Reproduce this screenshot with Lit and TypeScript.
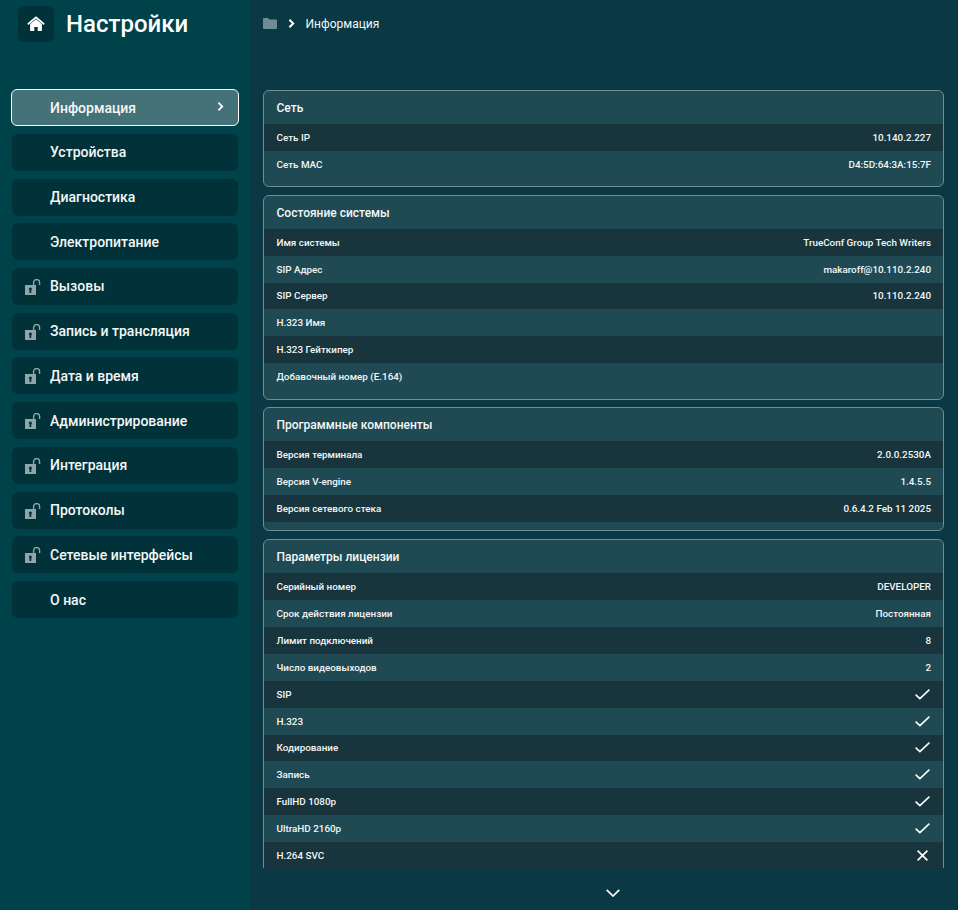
import { LitElement, html, css, svg } from "lit";
import { customElement } from "lit/decorators.js";

const nav: [string, boolean][] = [
  ["Устройства", false],
  ["Диагностика", false],
  ["Электропитание", false],
  ["Вызовы", true],
  ["Запись и трансляция", true],
  ["Дата и время", true],
  ["Администрирование", true],
  ["Интеграция", true],
  ["Протоколы", true],
  ["Сетевые интерфейсы", true],
  ["О нас", false],
];

type Row = [string, string];
const cards: { title: string; rows: Row[] }[] = [
  { title: "Сеть", rows: [["Сеть IP", "10.140.2.227"], ["Сеть MAC", "D4:5D:64:3A:15:7F"]] },
  {
    title: "Состояние системы",
    rows: [
      ["Имя системы", "TrueConf Group Tech Writers"],
      ["SIP Адрес", "makaroff@10.110.2.240"],
      ["SIP Сервер", "10.110.2.240"],
      ["H.323 Имя", ""],
      ["H.323 Гейткипер", ""],
      ["Добавочный номер (E.164)", ""],
    ],
  },
  {
    title: "Программные компоненты",
    rows: [
      ["Версия терминала", "2.0.0.2530A"],
      ["Версия V-engine", "1.4.5.5"],
      ["Версия сетевого стека", "0.6.4.2 Feb 11 2025"],
    ],
  },
  {
    title: "Параметры лицензии",
    rows: [
      ["Серийный номер", "DEVELOPER"],
      ["Срок действия лицензии", "Постоянная"],
      ["Лимит подключений", "8"],
      ["Число видеовыходов", "2"],
      ["SIP", "yes"],
      ["H.323", "yes"],
      ["Кодирование", "yes"],
      ["Запись", "yes"],
      ["FullHD 1080p", "yes"],
      ["UltraHD 2160p", "yes"],
      ["H.264 SVC", "no"],
    ],
  },
];

const lock = svg`<svg class="lock" viewBox="0 0 16 16" width="16" height="16">
  <path fill="#8fa6a8" fill-rule="evenodd" d="M0 6h11v10H0z M5.4 8.6a1.5 1.5 0 0 0-.9 2.7V14h1.8v-2.7A1.5 1.5 0 0 0 5.4 8.6z"/>
  <path fill="none" stroke="#8fa6a8" stroke-width="1.4" d="M8.6 6V3.5a3 3 0 0 1 6 0V6"/>
</svg>`;

const check = svg`<svg class="check" viewBox="0 0 15 11" width="15" height="11"><path fill="none" stroke="#fff" stroke-width="1.5" d="M.6 5.6 4.9 9.6 14.4.6"/></svg>`;
const cross = svg`<svg class="cross" viewBox="0 0 11 11" width="11" height="11"><path fill="none" stroke="#fff" stroke-width="1.6" d="M.6.6 10.4 10.4M10.4.6.6 10.4"/></svg>`;

@customElement("app-root")
export class AppRoot extends LitElement {
  static styles = css`
    :host {
      display: flex;
      width: 100%;
      height: 100vh;
      overflow: hidden;
      font-family: Roboto, "Liberation Sans", sans-serif;
      color: #fff;
      background: #0a3845;
    }
    .side {
      width: 249.5px;
      flex: none;
      box-sizing: border-box;
      background: #00424a;
      padding: 6px 11.5px 0 12px;
    }
    .brand {
      display: flex;
      align-items: center;
      gap: 12px;
      padding-left: 6px;
      height: 36px;
      margin-bottom: 47.1px;
    }
    .home {
      width: 36px;
      height: 36px;
      border-radius: 6px;
      background: #01323a;
      display: flex;
      align-items: center;
      justify-content: center;
    }
    .brand h1 {
      margin: 0;
      font-size: 24px;
      font-weight: 500;
      line-height: 36px;
    }
    .nav {
      display: flex;
      flex-direction: column;
      gap: 7.72px;
    }
    .item {
      height: 37px;
      box-sizing: border-box;
      border-radius: 6px;
      background: #01323a;
      display: flex;
      align-items: center;
      font-size: 14px;
      font-weight: 500;
      color: #f4f7f7;
      position: relative;
      padding-left: 38px;
    }
    .item.active {
      background: #457278;
      border: 1px solid #fff;
      margin: 0 -1px;
      padding-left: 38px;
      padding-right: 14px;
      justify-content: space-between;
    }
    .active svg {
      position: relative;
      top: -1px;
    }
    .lock {
      position: absolute;
      left: 13px;
      top: 11px;
    }
    .main {
      flex: 1;
      min-width: 0;
      display: flex;
      flex-direction: column;
    }
    .crumbs {
      height: 47px;
      flex: none;
      display: flex;
      align-items: center;
      padding-left: 13px;
      font-size: 12px;
      color: #f4f7f7;
    }
    .crumbs .chev {
      margin: 0 11px 0 11px;
    }
    .scroll {
      flex: 1;
      min-height: 0;
      overflow: hidden;
      margin-top: 42.8px;
      padding: 0 14px 0 13.5px;
      display: flex;
      flex-direction: column;
      gap: 7.7px;
    }
    .card {
      flex: none;
      border: 1px solid #6e8e92;
      border-radius: 6px;
      background: #1f4a54;
      padding-bottom: 8.5px;
      overflow: hidden;
    }
    .title {
      height: 33px;
      box-sizing: border-box;
      padding-top: 0.8px;
      display: flex;
      align-items: center;
      padding-left: 12.5px;
      font-size: 12px;
      font-weight: 500;
      color: #f4f7f7;
    }
    .row {
      height: 26.9px;
      display: flex;
      align-items: center;
      justify-content: space-between;
      padding: 0 12px 0 12.5px;
      font-size: 9.85px;
      font-weight: 500;
      color: #f4f7f7;
    }
    .row:nth-child(even) {
      background: #18353d;
    }
    .check {
      display: block;
      margin-right: 1.5px;
    }
    .cross {
      display: block;
      margin-right: 3px;
    }
    .foot {
      height: 42px;
      flex: none;
      display: flex;
      align-items: center;
      justify-content: center;
      padding: 7px 0 0 18px;
      box-sizing: border-box;
    }
  `;

  private value(v: string) {
    if (v === "yes") return check;
    if (v === "no") return cross;
    return html`<span>${v}</span>`;
  }

  render() {
    return html`
      <aside class="side">
        <div class="brand">
          <div class="home">
            <svg viewBox="0 0 20 18" width="18" height="16">
              <path fill="#fff" d="M10 3.6 3.4 9.1V17h4.7v-4.6h3.8V17h4.7V9.1z" />
              <path fill="none" stroke="#fff" stroke-width="1.9" d="M.8 9.3 10 1.6l9.2 7.7" />
            </svg>
          </div>
          <h1>Настройки</h1>
        </div>
        <nav class="nav">
          <div class="item active">
            <span>Информация</span>
            <svg viewBox="0 0 7 10" width="7" height="9">
              <path fill="none" stroke="#fff" stroke-width="2" d="M1.2 .8 5.4 5 1.2 9.2" />
            </svg>
          </div>
          ${nav.map(([t, l]) => html`<div class="item">${l ? lock : ""}<span>${t}</span></div>`)}
        </nav>
      </aside>
      <main class="main">
        <div class="crumbs">
          <svg viewBox="0 0 14 11" width="14" height="11">
            <path fill="#6f8c92" d="M0 1a1 1 0 0 1 1-1h4l1.5 1.5H13a1 1 0 0 1 1 1V10a1 1 0 0 1-1 1H1a1 1 0 0 1-1-1z" />
          </svg>
          <svg class="chev" viewBox="0 0 7 10" width="7" height="9">
            <path fill="none" stroke="#fff" stroke-width="2.2" d="M1.2 .8 5.4 5 1.2 9.2" />
          </svg>
          <span>Информация</span>
        </div>
        <div class="scroll">
          ${cards.map(
            (c) => html`<section class="card">
              <div class="rows">
                <div class="title">${c.title}</div>
                ${c.rows.map(
                  ([k, v]) => html`<div class="row"><span>${k}</span>${this.value(v)}</div>`
                )}
              </div>
            </section>`
          )}
        </div>
        <div class="foot">
          <svg viewBox="0 0 14 8" width="14" height="8">
            <path fill="none" stroke="#fff" stroke-width="1.7" d="M.7.8 7 7 13.3.8" />
          </svg>
        </div>
      </main>
    `;
  }
}
